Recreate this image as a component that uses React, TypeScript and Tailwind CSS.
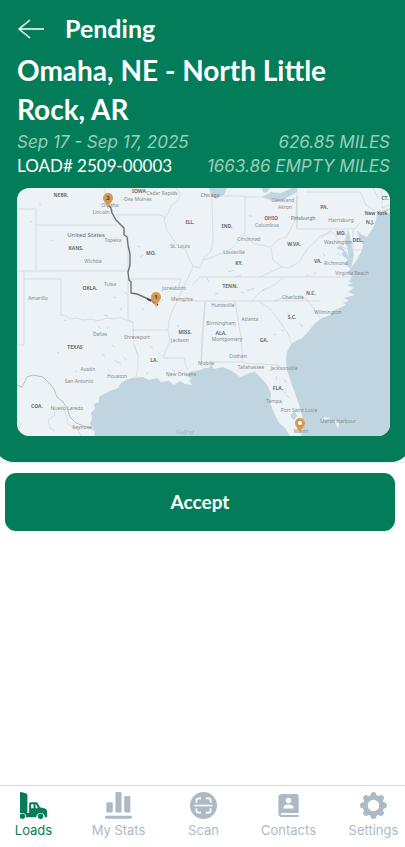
import { useState } from 'react';
import type { ReactNode } from 'react';

type TabName = 'Loads' | 'My Stats' | 'Scan' | 'Contacts' | 'Settings';

interface MapLabel {
  text: string;
  x: number;
  y: number;
}

const STATE_LABELS: MapLabel[] = [
  { text: 'NEBR.', x: 61, y: 197 },
  { text: 'IOWA', x: 139, y: 193 },
  { text: 'ILL.', x: 190, y: 224 },
  { text: 'KANS.', x: 76, y: 250 },
  { text: 'MO.', x: 151, y: 255 },
  { text: 'OKLA.', x: 90, y: 290 },
  { text: 'IND.', x: 227, y: 228 },
  { text: 'OHIO', x: 271, y: 220 },
  { text: 'PA.', x: 324, y: 209 },
  { text: 'N.J.', x: 370, y: 224 },
  { text: 'MD.', x: 341, y: 235 },
  { text: 'DEL.', x: 358, y: 242 },
  { text: 'CT.', x: 385, y: 200 },
  { text: 'W.VA.', x: 294, y: 246 },
  { text: 'KY.', x: 239, y: 265 },
  { text: 'VA.', x: 318, y: 263 },
  { text: 'TENN.', x: 230, y: 288 },
  { text: 'N.C.', x: 311, y: 295 },
  { text: 'TEXAS', x: 75, y: 349 },
  { text: 'MISS.', x: 185, y: 334 },
  { text: 'LA.', x: 154, y: 362 },
  { text: 'S.C.', x: 292, y: 319 },
  { text: 'ALA.', x: 221, y: 335 },
  { text: 'GA.', x: 264, y: 342 },
  { text: 'FLA.', x: 278, y: 390 },
  { text: 'COA.', x: 37, y: 408 },
];

const CITY_LABELS: MapLabel[] = [
  { text: 'Omaha', x: 110, y: 207 },
  { text: 'Lincoln', x: 101, y: 214 },
  { text: 'Cedar Rapids', x: 162, y: 195 },
  { text: 'Des Moines', x: 138, y: 201 },
  { text: 'Topeka', x: 113, y: 242 },
  { text: 'Wichita', x: 93, y: 263 },
  { text: 'St. Louis', x: 180, y: 248 },
  { text: 'Tulsa', x: 110, y: 286 },
  { text: 'Amarillo', x: 38, y: 300 },
  { text: 'Jonesboro', x: 174, y: 290 },
  { text: 'Memphis', x: 182, y: 301 },
  { text: 'Cleveland', x: 283, y: 202 },
  { text: 'Akron', x: 285, y: 209 },
  { text: 'Columbus', x: 267, y: 227 },
  { text: 'Harrisburg', x: 341, y: 222 },
  { text: 'Cincinnati', x: 249, y: 241 },
  { text: 'Louisville', x: 234, y: 254 },
  { text: 'Washington', x: 338, y: 244 },
  { text: 'Richmond', x: 336, y: 265 },
  { text: 'Virginia Beach', x: 352, y: 275 },
  { text: 'Huntsville', x: 223, y: 307 },
  { text: 'Charlotte', x: 293, y: 299 },
  { text: 'Wilmington', x: 328, y: 314 },
  { text: 'Birmingham', x: 221, y: 325 },
  { text: 'Atlanta', x: 250, y: 321 },
  { text: 'Montgomery', x: 227, y: 341 },
  { text: 'Dothan', x: 238, y: 358 },
  { text: 'Tallahassee', x: 251, y: 369 },
  { text: 'Jacksonville', x: 284, y: 370 },
  { text: 'Tampa', x: 274, y: 403 },
  { text: 'Port Saint Lucie', x: 299, y: 412 },
  { text: 'Miami', x: 301, y: 433 },
  { text: 'Marsh Harbour', x: 338, y: 423 },
  { text: 'Dallas', x: 100, y: 336 },
  { text: 'Shreveport', x: 137, y: 339 },
  { text: 'Jackson', x: 180, y: 342 },
  { text: 'Austin', x: 88, y: 371 },
  { text: 'San Antonio', x: 79, y: 383 },
  { text: 'Houston', x: 117, y: 378 },
  { text: 'New Orleans', x: 181, y: 376 },
  { text: 'Mobile', x: 206, y: 365 },
  { text: 'Nuevo Laredo', x: 67, y: 410 },
  { text: 'Reynosa', x: 82, y: 429 },
];

const STATE_LINES = [
  // plains
  'M17 209H36V271 M36 225H118 M17 271H128 M24 271V345H17 M24 279H61V315',
  'M61 315L66 316 70 319 76 318 84 320 92 319 98 321 106 318 114 319 120 317 127 321 133 322',
  'M104 188L107 196 110 203 112 210 114 219 120 224 124 230 128 237V279H181L178 287H186',
  'M112 215H161L166 219 M128 279V305V320L133 322V330H168 M133 330L134 345 138 355 138 368 136 377',
  // rivers and the gulf states
  'M176 188L181 194 178 201 171 206 168 213 164 219 166 228 172 238 178 246 186 250 188 257 193 266 190 274 186 282 182 290 178 300 173 309 169 320 168 330 170 340 166 350 163 358H185V364L188 370',
  'M181 301H205L202 335 201 365 M205 301H320 M205 301V307L201 367 M235 301L241 338 243 362H211L212 368 M243 363L279 365 280 368 M259 301L270 309 279 320 288 334 291 343',
  'M193 266L200 268 204 258 211 251 213 240 212 196H245V233L239 241 231 249 220 254 210 258 204 260 M200 277H353 M192 285L200 277',
  'M245 235L254 244 262 245 270 247 278 240 286 237 291 229 296 218 297 196V229H355L360 223 M271 248L273 260 282 267 289 268 300 261 308 248 315 242 320 236 330 233',
  'M297 229V188 M306 192H360L366 205 375 211 M321 238L330 231 336 236 341 246 346 249 M353 230V250H362 M252 301L260 292 274 285 283 278 M260 277L282 267',
  'M245 197H261 M373 188L379 199 M382 188V208L390 205 M274 301L282 298 307 299 320 318',
];

const COASTLINE =
  'M95 436L94 429 90 424 92 418 91 413 95 409 94 404 99 402 99 397 104 394 110 391 118 388 121 383 126 380 132 378 143 377 149 380 157 378 161 382 169 381 174 385 180 381 185 384 192 385 189 380 192 379 187 376 190 372 200 370 205 368 209 368 211 365 214 369 223 367 232 371 240 377 250 373 255 372 262 379 267 385 271 393 270 403 275 415 279 423 285 428 290 436H301L303 428 302 415 299 405 295 393 291 382 287 370 286 360 287 352 292 343 302 338 308 332 315 323 322 318 330 315 335 310 346 305 343 303 349 301 344 298 355 295 348 292 354 288 347 285 353 283 348 281 353 277 347 272 351 269 345 264 348 260 342 255 343 251 336 248 341 246 346 252 349 257 347 247 345 240 348 230 350 236 352 247 354 255 351 268 358 258 362 250 363 245 359 237 357 230 362 235 367 237 373 228 376 220 377 213 390 208V436Z';

const LAKES = [
  'M209 188H227L224 195 216 199 211 195Z',
  'M261 197L268 199 276 202 286 198 297 192 297 188H292L281 193 271 192 266 195Z',
  'M262 188H270L266 193 263 192Z',
  'M291 414L295 412 297 416 294 420 291 417Z',
];

// small reservoirs, drawn as short strokes
const PONDS =
  'M39 204l2 1 M30 222l2-1 M50 240l3 1 M122 200l3-1 M137 246l3 1 M140 257l3-2 M125 292l2 3 M113 297l3 1 M120 310l2-3 M104 315l4 1 M98 326l3 3 M107 329l2-2 M93 331l4 3 M112 345l3 2 M102 354l3 2 M114 360l7 4 M124 357l2 3 M134 345l4 10 M108 369l2 3 M82 345l2 1 M75 371l2 1 M57 352l2 1 M64 320l3 1 M160 302l3-3 M142 308l2 2 M150 346l3 3 M158 352l2 2 M177 325l2 2 M146 374l3-2 M166 374l4 3 M172 369l3 3 M249 216l3 0 M228 272l6-2 M236 277l5-2 M247 291l8-3 M262 290l3-1 M241 292l3 1 M233 325l2 2 M287 313l3 2 M299 323l4 4 M281 330l3 1 M274 335l2-1 M284 379l2 4 M283 390l3 4 M287 395l2 3 M276 376l1 4 M281 403l2 2 M306 275l3 1 M314 274l3-2 M323 253l2 3 M337 253l4 3 M285 298l2 3 M206 277l3 5 M215 294l3-1';

function MapPin({ x, y, label }: { x: number; y: number; label: string }) {
  return (
    <g transform={`translate(${x} ${y})`}>
      <path d="M0 5C-1-1-5-2-5-6A5 5 0 0 1 5-6C5-2 1-1 0 5Z" fill="#d29a54" />
      {label ? (
        <text y="-4" textAnchor="middle" fontSize="6" fontWeight="700" fill="#59401d">
          {label}
        </text>
      ) : (
        <circle cy="-6" r="2" fill="#fff" />
      )}
    </g>
  );
}

function RouteMap() {
  return (
    <svg
      viewBox="17 188 373 248"
      role="img"
      aria-label="Route map"
      className="mt-2.5 block w-full rounded-[12px] bg-[#ecf2f5] font-['Noto_Sans',sans-serif]"
    >
      <path d={COASTLINE} fill="#c0d5e0" />
      {LAKES.map((d) => (
        <path key={d} d={d} fill="#c0d5e0" />
      ))}
      <path d={PONDS} fill="none" stroke="#bfd8e3" strokeWidth="0.9" />
      <path d="M383 213L390 210V213Z M320 421l5-4 6 1-4 1-6 3z M334 420l5 3-1 6-2-5z" fill="#ecf2f5" />
      {STATE_LINES.map((d) => (
        <path key={d} d={d} fill="none" stroke="#cfd5d7" strokeWidth="0.7" />
      ))}
      {/* Mexican border */}
      <path
        d="M17 385L22 387 27 377 33 375 43 377 49 383 54 389 57 397 63 402 67 408 70 417 76 423 84 426 91 428 94 430"
        fill="none"
        stroke="#b2b8ba"
        strokeWidth="0.9"
      />
      <path
        d="M54 407L55 415 48 420 50 428 55 431 M62 406L66 414 68 424 78 430 81 436 M17 420l4 4-3 7"
        fill="none"
        stroke="#cfd5d7"
        strokeWidth="0.7"
      />

      <g fontSize="5" textAnchor="middle" fill="#858b8e">
        {CITY_LABELS.map((c) => (
          <text key={c.text} x={c.x} y={c.y}>{c.text}</text>
        ))}
      </g>
      <g fontSize="5" fontWeight="700" textAnchor="middle" fill="#6b7073">
        {STATE_LABELS.map((s) => (
          <text key={s.text} x={s.x} y={s.y}>{s.text}</text>
        ))}
      </g>
      <g fontSize="6" textAnchor="middle" fill="#6b7073">
        <text x="86" y="237">United States</text>
        <text x="210" y="197" fontSize="5">Chicago</text>
        <text x="303" y="220" fontSize="5">Pittsburgh</text>
        <text x="376" y="215" fontSize="5" fontWeight="500" fill="#3f4446">New York</text>
        <text x="185" y="434" fontStyle="italic" fill="#91adba">Gulf of</text>
      </g>

      {/* route */}
      <path
        d="M108 205L111 208 112 213 116 220 120 224 124 228V235L127 237 128 245 130 254V265L128 272 129 280 131 282V293L137 294 146 298 151 300 156 304"
        fill="none"
        stroke="#6f7375"
        strokeWidth="1.4"
        strokeLinejoin="round"
      />
      <path d="M147 299l4 2 M153 302l5 3" stroke="#3f4446" strokeWidth="1.5" />
      <MapPin x={108} y={204} label="2" />
      <MapPin x={156} y={303} label="1" />
      <MapPin x={300} y={429} label="" />
    </svg>
  );
}

function TruckIcon() {
  return (
    <svg viewBox="0 0 80 80" className="size-[27px]" fill="currentColor" aria-hidden="true">
      <path d="M0 3Q0 0 3 0L17 4Q22 6 22 10V62H0Z" />
      <path
        fillRule="evenodd"
        d="M27 35Q27 30 32 30H47Q51 30 53 34L59 45L74 49Q80 51 80 57V75H74A13 13 0 0 0 48 75H18A12 12 0 0 0 10 62H27ZM33 36V48H40V36ZM46 36V48H53L48 36Z"
      />
      <circle cx="7" cy="72" r="8" />
      <circle cx="61" cy="72" r="8" />
    </svg>
  );
}

function StatsIcon() {
  return (
    <svg viewBox="0 0 80 80" className="size-[27px]" fill="currentColor" aria-hidden="true">
      <rect x="4" y="30" width="19" height="31" rx="3" />
      <rect x="31" y="0" width="18" height="61" rx="3" />
      <rect x="57" y="12" width="18" height="49" rx="3" />
      <rect x="0" y="70" width="80" height="9" rx="4" />
    </svg>
  );
}

function ScanIcon() {
  return (
    <svg viewBox="0 0 80 80" className="size-[27px]" aria-hidden="true">
      <circle cx="40" cy="40" r="40" fill="currentColor" />
      <path
        d="M19 32V25Q19 19 25 19H33 M47 19H55Q61 19 61 25V32 M61 48V55Q61 61 55 61H47 M33 61H25Q19 61 19 55V48 M13 40H67"
        fill="none"
        stroke="#fff"
        strokeWidth="5"
      />
    </svg>
  );
}

function ContactsIcon() {
  return (
    <svg viewBox="0 0 80 80" className="size-[27px]" aria-hidden="true">
      <path
        d="M20 6H64Q70 6 70 12V62H22Q17 62 17 65T22 68H70V74H20Q10 74 10 64V16Q10 6 20 6Z"
        fill="currentColor"
      />
      <circle cx="40" cy="25" r="8" fill="#fff" />
      <path d="M24 49Q25 37 40 37T56 49Z" fill="#fff" />
    </svg>
  );
}

function SettingsIcon() {
  return (
    <svg viewBox="0 0 80 80" className="size-[27px]" aria-hidden="true">
      <circle cx="40" cy="40" r="31" fill="currentColor" />
      {[0, 45, 90, 135, 180, 225, 270, 315].map((angle) => (
        <path
          key={angle}
          d="M27 13Q32 10 32 5Q33 0 40 0T48 5Q48 10 53 13Z"
          fill="currentColor"
          transform={`rotate(${angle} 40 40)`}
        />
      ))}
      <circle cx="40" cy="40" r="17" fill="#fff" />
    </svg>
  );
}

const TABS: { name: TabName; icon: ReactNode }[] = [
  { name: 'Loads', icon: <TruckIcon /> },
  { name: 'My Stats', icon: <StatsIcon /> },
  { name: 'Scan', icon: <ScanIcon /> },
  { name: 'Contacts', icon: <ContactsIcon /> },
  { name: 'Settings', icon: <SettingsIcon /> },
];

export default function App() {
  const [activeTab, setActiveTab] = useState<TabName>('Loads');

  return (
    <div className="flex min-h-screen flex-col overflow-x-hidden bg-white font-['Lato',sans-serif]">
      <div className="border-b border-[#e6ebf0]">
        <header className="-mx-1.5 rounded-b-[20px] bg-[#037d59] pt-3 pr-[21px] pb-[26px] pl-[23px] text-white">
          <div className="flex items-center gap-5">
            <button type="button" aria-label="Back" className="pt-0.5">
              <svg viewBox="0 0 28 20" className="h-5 w-7" fill="none" stroke="currentColor" strokeWidth="1.5" aria-hidden="true">
                <path d="M27 10H2 M13 1L2 10L13 19" />
              </svg>
            </button>
            <h1 className="text-[25px] leading-8 font-bold">Pending</h1>
          </div>

          <h2 className="mt-[7px] text-[28px] leading-[39px] font-bold">Omaha, NE - North Little Rock, AR</h2>

          <div className="mt-px flex justify-between font-['Inter',sans-serif] text-[17px] leading-6 text-[#9bccbc] italic">
            <p>Sep 17 - Sep 17, 2025</p>
            <p>626.85 MILES</p>
          </div>
          <div className="flex justify-between text-[17px] leading-6">
            <p>LOAD# 2509-00003</p>
            <p className="font-['Inter',sans-serif] text-[#9bccbc] italic">1663.86 EMPTY MILES</p>
          </div>

          <RouteMap />
        </header>
      </div>

      <main className="flex-1 pt-2.5 pr-2.5 pl-[5px]">
        <button
          type="button"
          className="h-[58px] w-full rounded-[11px] bg-[#037d59] text-[19px] font-bold text-white"
        >
          Accept
        </button>
      </main>

      <nav className="border-t border-[#d8d8d8]">
        <ul className="-mr-[11px] -ml-[9px] grid grid-cols-5 pt-1.5 pb-[7px]">
          {TABS.map((tab) => (
            <li key={tab.name}>
              <button
                type="button"
                onClick={() => setActiveTab(tab.name)}
                className={`flex w-full flex-col items-center gap-px font-['Inter',sans-serif] text-[13px] leading-5 ${
                  activeTab === tab.name ? 'text-[#037d59]' : 'text-[#abbac5]'
                }`}
              >
                {tab.icon}
                {tab.name}
              </button>
            </li>
          ))}
        </ul>
      </nav>
    </div>
  );
}
